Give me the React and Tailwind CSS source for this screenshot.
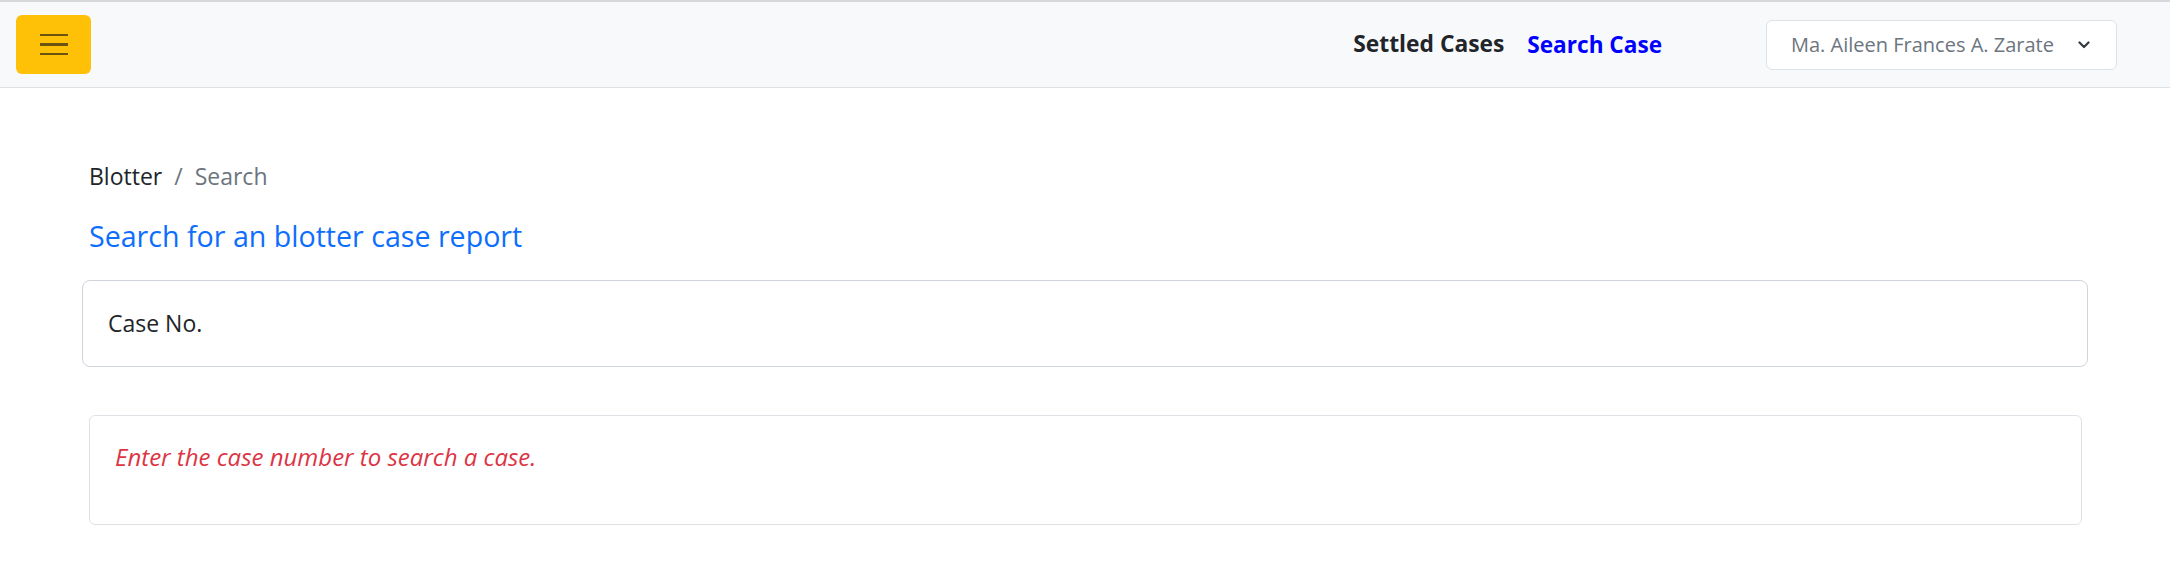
import { useState } from 'react'

const font = { fontFamily: '"Open Sans", "Noto Sans", sans-serif' }

function Chevron() {
  return (
    <svg width="12" height="8" viewBox="0 0 12 8" className="shrink-0">
      <path d="M1.5 1.5l4.5 4.5 4.5-4.5" fill="none" stroke="#343a40" strokeWidth="2.2" strokeLinecap="round" strokeLinejoin="round" />
    </svg>
  )
}

export default function App() {
  const [caseNo, setCaseNo] = useState('')

  return (
    <div className="min-h-screen bg-white text-[#212529]" style={font}>
      {/* Navbar */}
      <nav className="h-[88px] border-t-2 border-[#d6d8db] border-b border-b-[#dee2e6] bg-[#f8f9fa] flex items-center pl-4 pr-[53px]">
        <button className="w-[75px] h-[59px] rounded-md bg-[#ffc107] flex flex-col items-center justify-center gap-[7px]">
          <span className="block w-[28px] h-[2.5px] bg-[#6b5310]" />
          <span className="block w-[28px] h-[2.5px] bg-[#6b5310]" />
          <span className="block w-[28px] h-[2.5px] bg-[#6b5310]" />
        </button>
        <div className="ml-auto flex items-center">
          <a className="text-[22.8px] font-bold text-[#212529]">Settled Cases</a>
          <a className="ml-[23px] text-[22.6px] font-bold text-[#0000ff]">Search Case</a>
          <div className="ml-[104px] w-[351px] h-[50px] rounded-md border border-[#dee2e6] bg-white flex items-center justify-between pl-[24px] pr-[26px]">
            <span className="text-[20px] text-[#6c757d] whitespace-nowrap">Ma. Aileen Frances A. Zarate</span>
            <Chevron />
          </div>
        </div>
      </nav>

      {/* Content */}
      <main className="px-[82px] pt-[72px]">
        <div className="ml-[7px] flex items-center text-[23px] leading-[33px]">
          <span className="text-[#212529]">Blotter</span>
          <span className="mx-[12px] text-[#6c757d]">/</span>
          <span className="text-[#6c757d]">Search</span>
        </div>

        <h4 className="ml-[7px] mt-[25px] text-[28.6px] leading-[36px] text-[#0d6efd]">
          Search for an blotter case report
        </h4>

        <div className="mt-[26px] h-[87px] rounded-lg border border-[#ced4da] bg-white flex items-center px-[25px]">
          <input
            value={caseNo}
            onChange={e => setCaseNo(e.target.value)}
            placeholder="Case No."
            className="w-full text-[23px] outline-none placeholder:text-[#212529] bg-transparent"
            style={font}
          />
        </div>

        <div className="ml-[7px] mr-[6px] mt-[48px] h-[110px] rounded-md border border-[#dee2e6] bg-white pt-[26px] pl-[25px]">
          <p className="text-[24px] leading-[30px] italic text-[#dc3545]">
            Enter the case number to search a case.
          </p>
        </div>
      </main>
    </div>
  )
}
